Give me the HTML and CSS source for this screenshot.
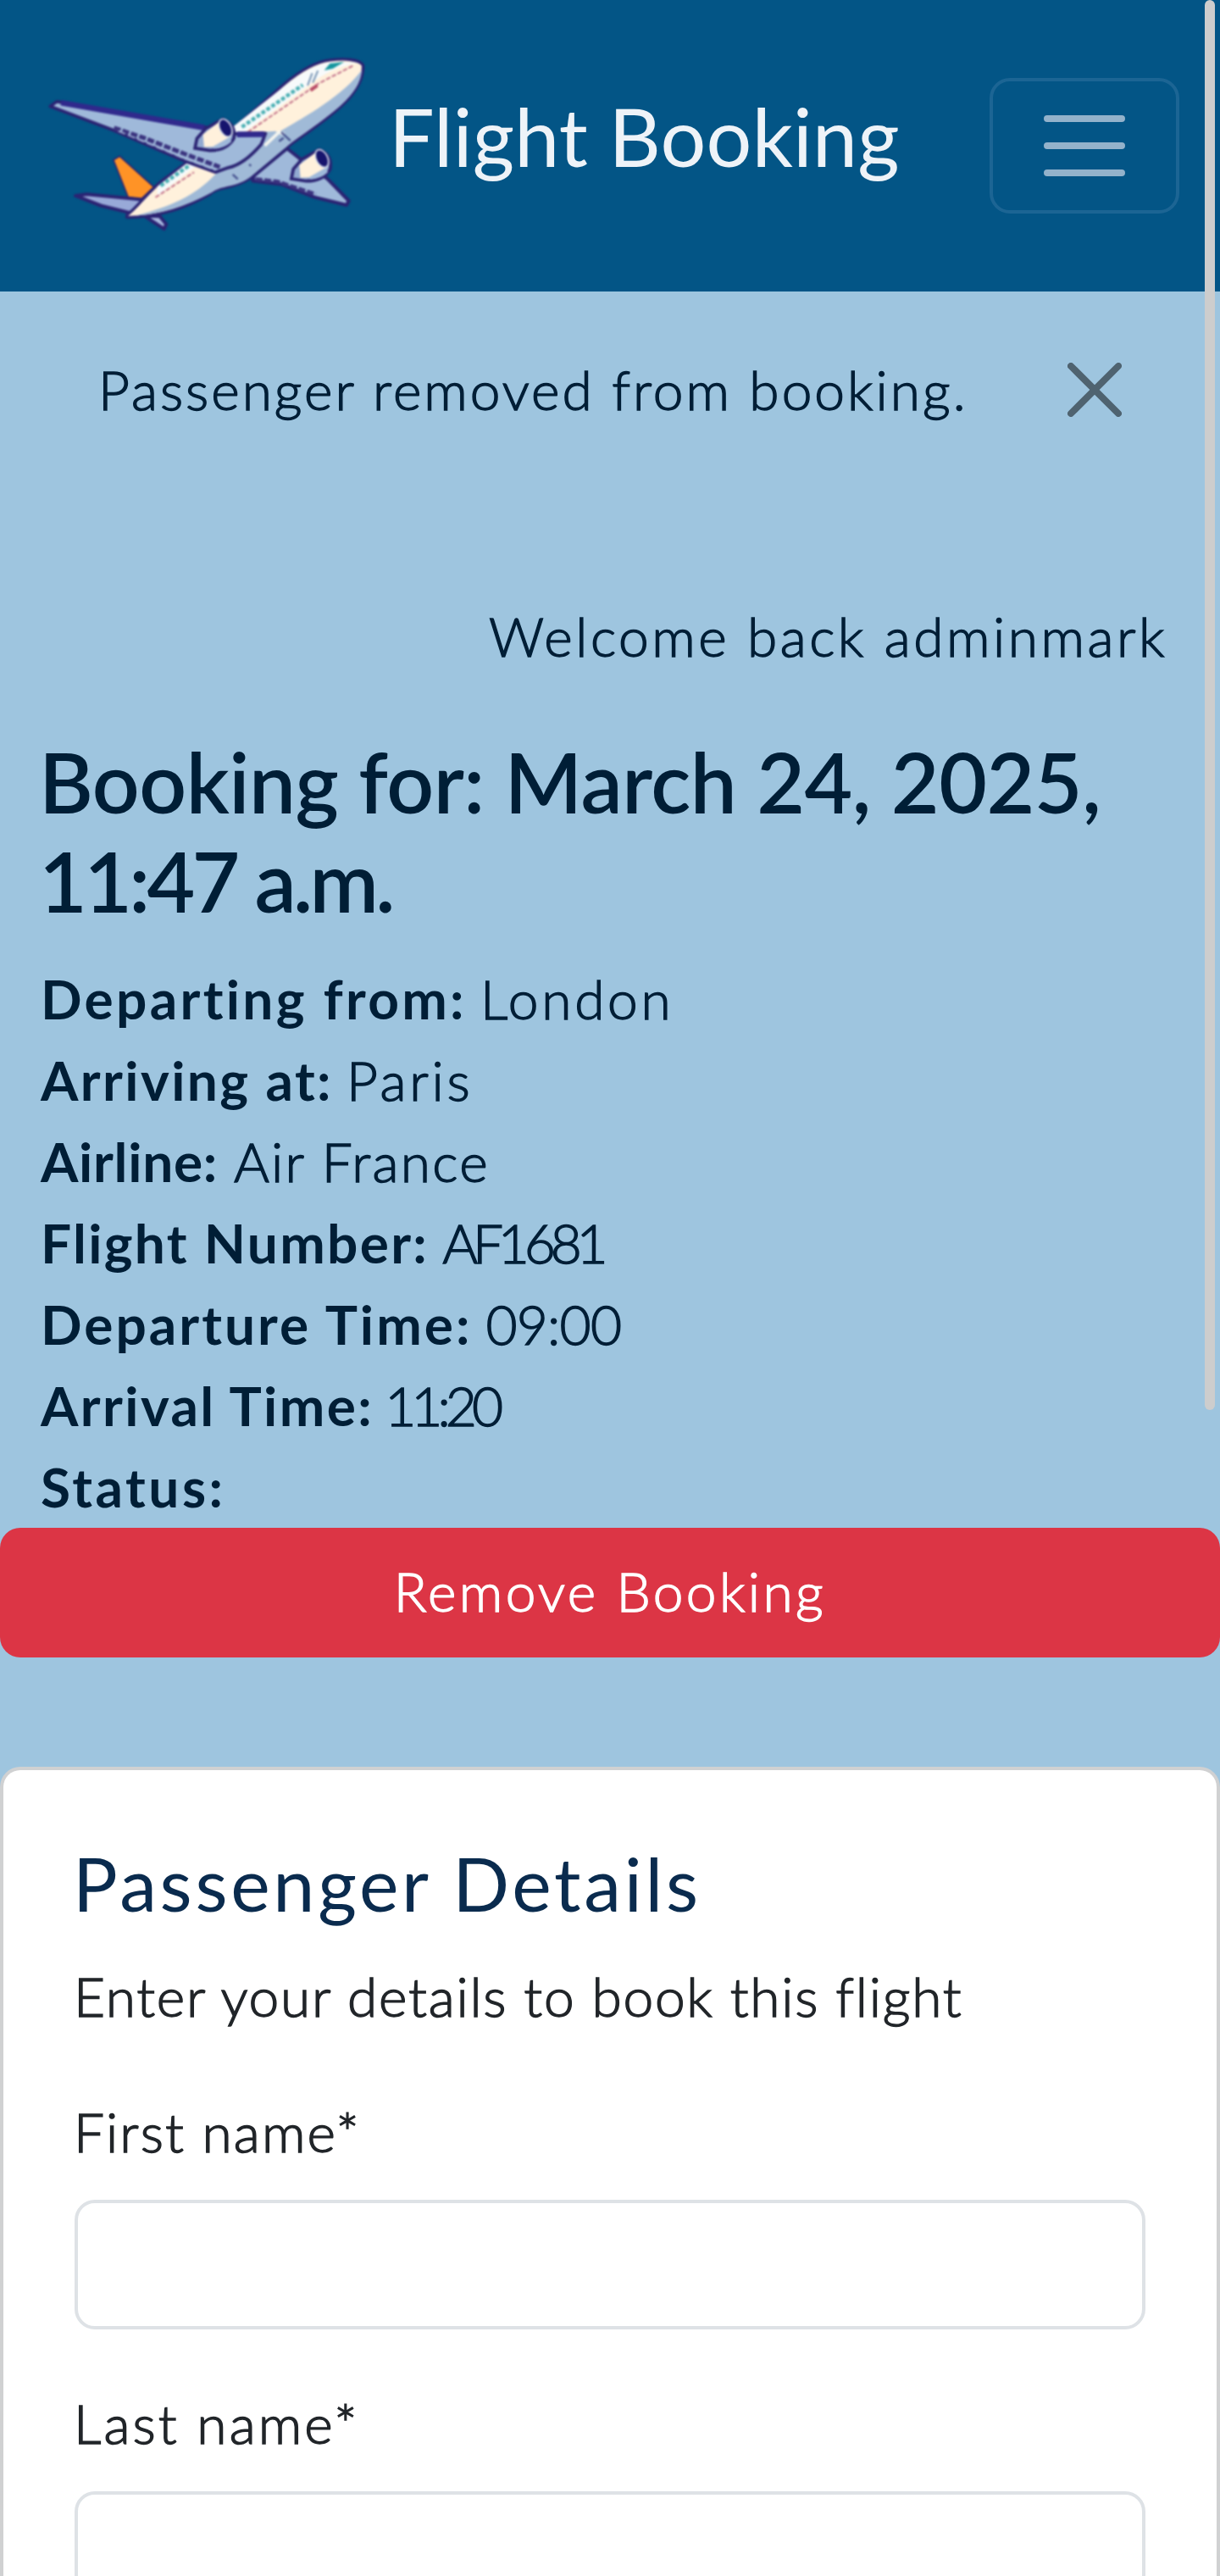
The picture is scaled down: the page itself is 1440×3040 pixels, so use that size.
FILE: index.html
```html
<!DOCTYPE html>
<html lang="en">
<head>
<meta charset="utf-8">
<title>Flight Booking</title>
<link rel="stylesheet" href="styles.css">
</head>
<body>
<header class="navbar">
  <a class="brand">
    <svg class="logo" viewBox="5 4 1244 711" aria-hidden="true">
      <g stroke="#2b2473" stroke-width="12" stroke-linejoin="round">
        <path d="M775 470 L890 375 L960 430 L1030 480 L1106 558 L1098 573 L985 545 L870 500 L770 488Z" fill="#9fb9da"/>
        <path d="M283 415 L305 402 L425 510 L380 552 L335 546Z" fill="#ff9326" stroke-width="5"/>
        <path d="M390 610 L445 612 L468 640 L460 656Z" fill="#a9b9e0"/>
        <path d="M150 540 L190 535 L400 555 L350 602 L240 575Z" fill="#98a9d8"/>
        <path d="M330 608 C375 575 405 520 470 475 L720 290 L880 150 C940 100 990 72 1040 66 C1090 60 1145 62 1156 85 C1160 180 1050 260 910 355 L760 480 C700 520 650 505 620 535 C540 580 450 615 330 616Z" fill="#fff1dc" stroke-width="10"/>
      </g>
      <path d="M1152 100 C1085 190 960 260 870 312 L800 360 L640 465 C570 540 480 580 360 610 C450 606 540 575 625 530 C665 500 710 515 765 472 L905 355 C1050 250 1145 190 1152 100Z" fill="#a0bad7"/>
      <path d="M436 508 L880 158 C940 110 1000 76 1045 72 L1140 75 Q1040 92 965 155 L740 318 L560 445 L437 540Z" fill="#f7fafb"/>
      <path d="M430 546 L565 458 M735 330 L1000 148 L1120 86" stroke="#c4748c" stroke-width="6" stroke-dasharray="16 6" fill="none"/>
      <path d="M448 505 L550 433 M732 300 L945 153" stroke="#4bb0b4" stroke-width="13" stroke-dasharray="14 7" fill="none"/>
      <path d="M1020 102 L1040 78 L1090 72 L1050 96Z" fill="#16969f"/>
      <path d="M962 155 L978 112 M980 145 L998 103" stroke="#7895b5" stroke-width="6"/>
      <path d="M972 172 L996 155" stroke="#b94c66" stroke-width="12"/>
      <path d="M750 320 L850 314 L870 330 L780 425 L690 470 L640 485Z" fill="#a0bad7"/>
      <path d="M62 228 L85 211 L600 300 L720 325 L815 322 L800 360 Q740 430 685 442 L640 458 L530 418 L280 310Z" fill="#9fb9da" stroke="#2b2473" stroke-width="11" stroke-linejoin="round"/>
      <path d="M100 215 L600 302 M715 326 L810 325" stroke="#30298c" stroke-width="20"/>
      <path d="M285 303 L390 338 L535 395 L655 440" stroke="#3b347f" stroke-width="15" stroke-dasharray="24 7" fill="none"/>
      <path d="M300 314 L530 410 L640 451" stroke="#9fb0d4" stroke-width="5" stroke-dasharray="26 10" fill="none"/>
      <path d="M780 482 L855 490 L990 535" stroke="#3b347f" stroke-width="13" stroke-dasharray="24 7" fill="none"/>
      <path d="M812 365 L862 318 L880 325" stroke="#f4f5ef" stroke-width="11" fill="none"/>
      <path d="M870 318 L902 348 M862 350 L878 338 M700 466 L718 482 M758 430 L764 436" stroke="#45518e" stroke-width="7"/>
      <g id="engine">
        <path d="M568 374 L575 340 L605 306 L665 272 Q712 290 704 340 Q680 382 620 382Z" fill="#91a9d1" stroke="#2b2473" stroke-width="11"/>
        <path d="M596 326 L650 284 L694 338 L666 368 L600 370Z" fill="#fff1dc"/>
        <path d="M630 369 L694 332 L695 352 Q670 375 635 376Z" fill="#9fb9da"/>
        <ellipse cx="675" cy="303" rx="20" ry="33" transform="rotate(-27 675 303)" fill="#16146d" stroke="#d8e0ec" stroke-width="5"/>
      </g>
      <use href="#engine" x="337" y="107"/>
    </svg>
    <span class="brand-name">Flight Booking</span>
  </a>
  <button class="toggler" aria-label="Toggle navigation">
    <svg viewBox="0 0 30 30"><path stroke="#93b2cb" stroke-linecap="round" stroke-width="2" d="M4 7h22M4 15h22M4 23h22"/></svg>
  </button>
</header>

<main>
  <div class="alert">
    <span class="alert-text">Passenger removed from booking.</span>
    <svg class="close" viewBox="0 0 16 16"><path d="M.293.293a1 1 0 0 1 1.414 0L8 6.586 14.293.293a1 1 0 1 1 1.414 1.414L9.414 8l6.293 6.293a1 1 0 0 1-1.414 1.414L8 9.414l-6.293 6.293a1 1 0 0 1-1.414-1.414L6.586 8 .293 1.707a1 1 0 0 1 0-1.414z"/></svg>
  </div>
  <p class="welcome">Welcome back adminmark</p>
  <section class="booking">
    <h1><span class="date">Booking for: March 24, 2025,</span> <span class="time">11:47 a.m.</span></h1>
    <div class="row"><b class="l-from">Departing from:</b><span class="v-from">London</span></div>
    <div class="row"><b class="l-to">Arriving at:</b><span class="v-from">Paris</span></div>
    <div class="row"><b class="l-airline">Airline:</b><span class="v-airline">Air France</span></div>
    <div class="row"><b class="l-number">Flight Number:</b><span class="v-number">AF1681</span></div>
    <div class="row"><b class="l-dep">Departure Time:</b><span class="v-dep">09:00</span></div>
    <div class="row"><b class="l-arr">Arrival Time:</b><span class="v-arr">11:20</span></div>
    <div class="row"><b class="l-status">Status:</b></div>
  </section>
  <button class="remove">Remove Booking</button>
  <form class="card">
    <h2>Passenger Details</h2>
    <p class="intro">Enter your details to book this flight</p>
    <label class="first" for="first">First name*</label>
    <input id="first" type="text">
    <label class="last" for="last">Last name*</label>
    <input id="last" type="text">
  </form>
</main>
<div class="scroll-thumb"></div>
</body>
</html>
```
FILE: styles.css
```css
* { box-sizing: border-box; margin: 0; padding: 0; }

html { overflow: hidden; }

body {
  position: relative;
  height: 3040px;
  overflow: hidden;
  background: #9ec5df;
  color: #001e36;
  font: 300 64px/96px Lato, "Liberation Sans", sans-serif;
  -webkit-text-stroke: 1.4px currentColor;
  white-space: nowrap;
}

button, input { font: inherit; border: 0; -webkit-text-stroke: inherit; }
svg { display: block; }

/* Navbar */
.navbar {
  display: flex;
  justify-content: space-between;
  align-items: center;
  height: 344px;
  padding: 0 48px 0 40px;
  background: #035586;
}
.brand { display: flex; align-items: center; color: #eef3f8; }
.logo { width: 420px; height: 240px; margin-top: -4px; filter: blur(0.8px); }
.brand-name {
  font-size: 95px;
  font-weight: 400;
  letter-spacing: 0.2px;
  line-height: 120px;
  margin: -25px 0 0 -1px;
  -webkit-text-stroke: 0;
}
.toggler {
  display: flex;
  align-items: center;
  justify-content: center;
  width: 224px;
  height: 160px;
  border: 4px solid #1c6594;
  border-radius: 24px;
  background: none;
}
.toggler svg { width: 120px; height: 120px; }

/* Alert */
.alert {
  display: flex;
  justify-content: space-between;
  align-items: center;
  margin-top: 68px;
  padding: 0 116px 0 116px;
}
.alert-text { letter-spacing: 3px; }
.close { width: 64px; height: 64px; fill: #4f6370; }

.welcome {
  margin-top: 195px;
  padding-right: 62px;
  text-align: right;
  letter-spacing: 3.5px;
}

/* Booking summary */
.booking { padding: 65px 48px 0; }
h1 {
  margin-left: -2px;
  font-size: 98px;
  font-weight: 600;
  line-height: 117.3px;
  padding-bottom: 32px;
  white-space: normal;
  -webkit-text-stroke: 0;
}
.date { letter-spacing: -0.5px; }
.time { letter-spacing: -3.7px; }
.row { display: flex; gap: 16px; height: 96px; }
.row b { font-weight: 700; -webkit-text-stroke: 0; }
.l-from { letter-spacing: 3.3px; }
.l-to { letter-spacing: 2.4px; }
.l-airline { letter-spacing: 0.7px; }
.l-number { letter-spacing: 2.3px; }
.l-dep { letter-spacing: 3px; }
.l-arr { letter-spacing: 2.4px; }
.l-status { letter-spacing: 3.5px; }
.v-from { letter-spacing: 3.7px; }
.v-airline { letter-spacing: 2.3px; margin-left: 3px; }
.v-number { letter-spacing: -6.2px; }
.v-dep { letter-spacing: -0.8px; }
.v-arr { letter-spacing: -6px; margin-left: -3px; }

.remove {
  display: block;
  width: 100%;
  height: 153px;
  padding-bottom: 2px;
  border-radius: 24px;
  background: #dc3545;
  color: #fff;
  letter-spacing: 3.4px;
}

/* Passenger form */
.card {
  margin-top: 129px;
  padding: 80px 84px 0;
  height: 956px;
  overflow: hidden;
  border: 4px solid #d0d1d2;
  border-bottom: 0;
  border-radius: 24px 24px 0 0;
  background: #fff;
  color: #212529;
}
h2 {
  color: #0a2b4e;
  font-size: 88px;
  font-weight: 400;
  line-height: 106px;
  letter-spacing: 3.7px;
  margin-left: -2px;
  -webkit-text-stroke: 0;
}
.intro { margin-top: 33px; letter-spacing: 1.74px; }
label { display: block; }
.first { margin-top: 64px; letter-spacing: 2.1px; }
.last { margin-top: 63px; letter-spacing: 3.1px; }
.intro, label { margin-left: -1px; }
input {
  display: block;
  width: 100%;
  height: 153px;
  margin-top: 32px;
  border: 4px solid #dee2e6;
  border-radius: 24px;
  background: #fff;
}

/* Overlay scrollbar */
.scroll-thumb {
  position: absolute;
  top: 0;
  right: 6px;
  width: 12px;
  height: 1664px;
  border-radius: 6px;
  background: #cdcdcd;
}
```
